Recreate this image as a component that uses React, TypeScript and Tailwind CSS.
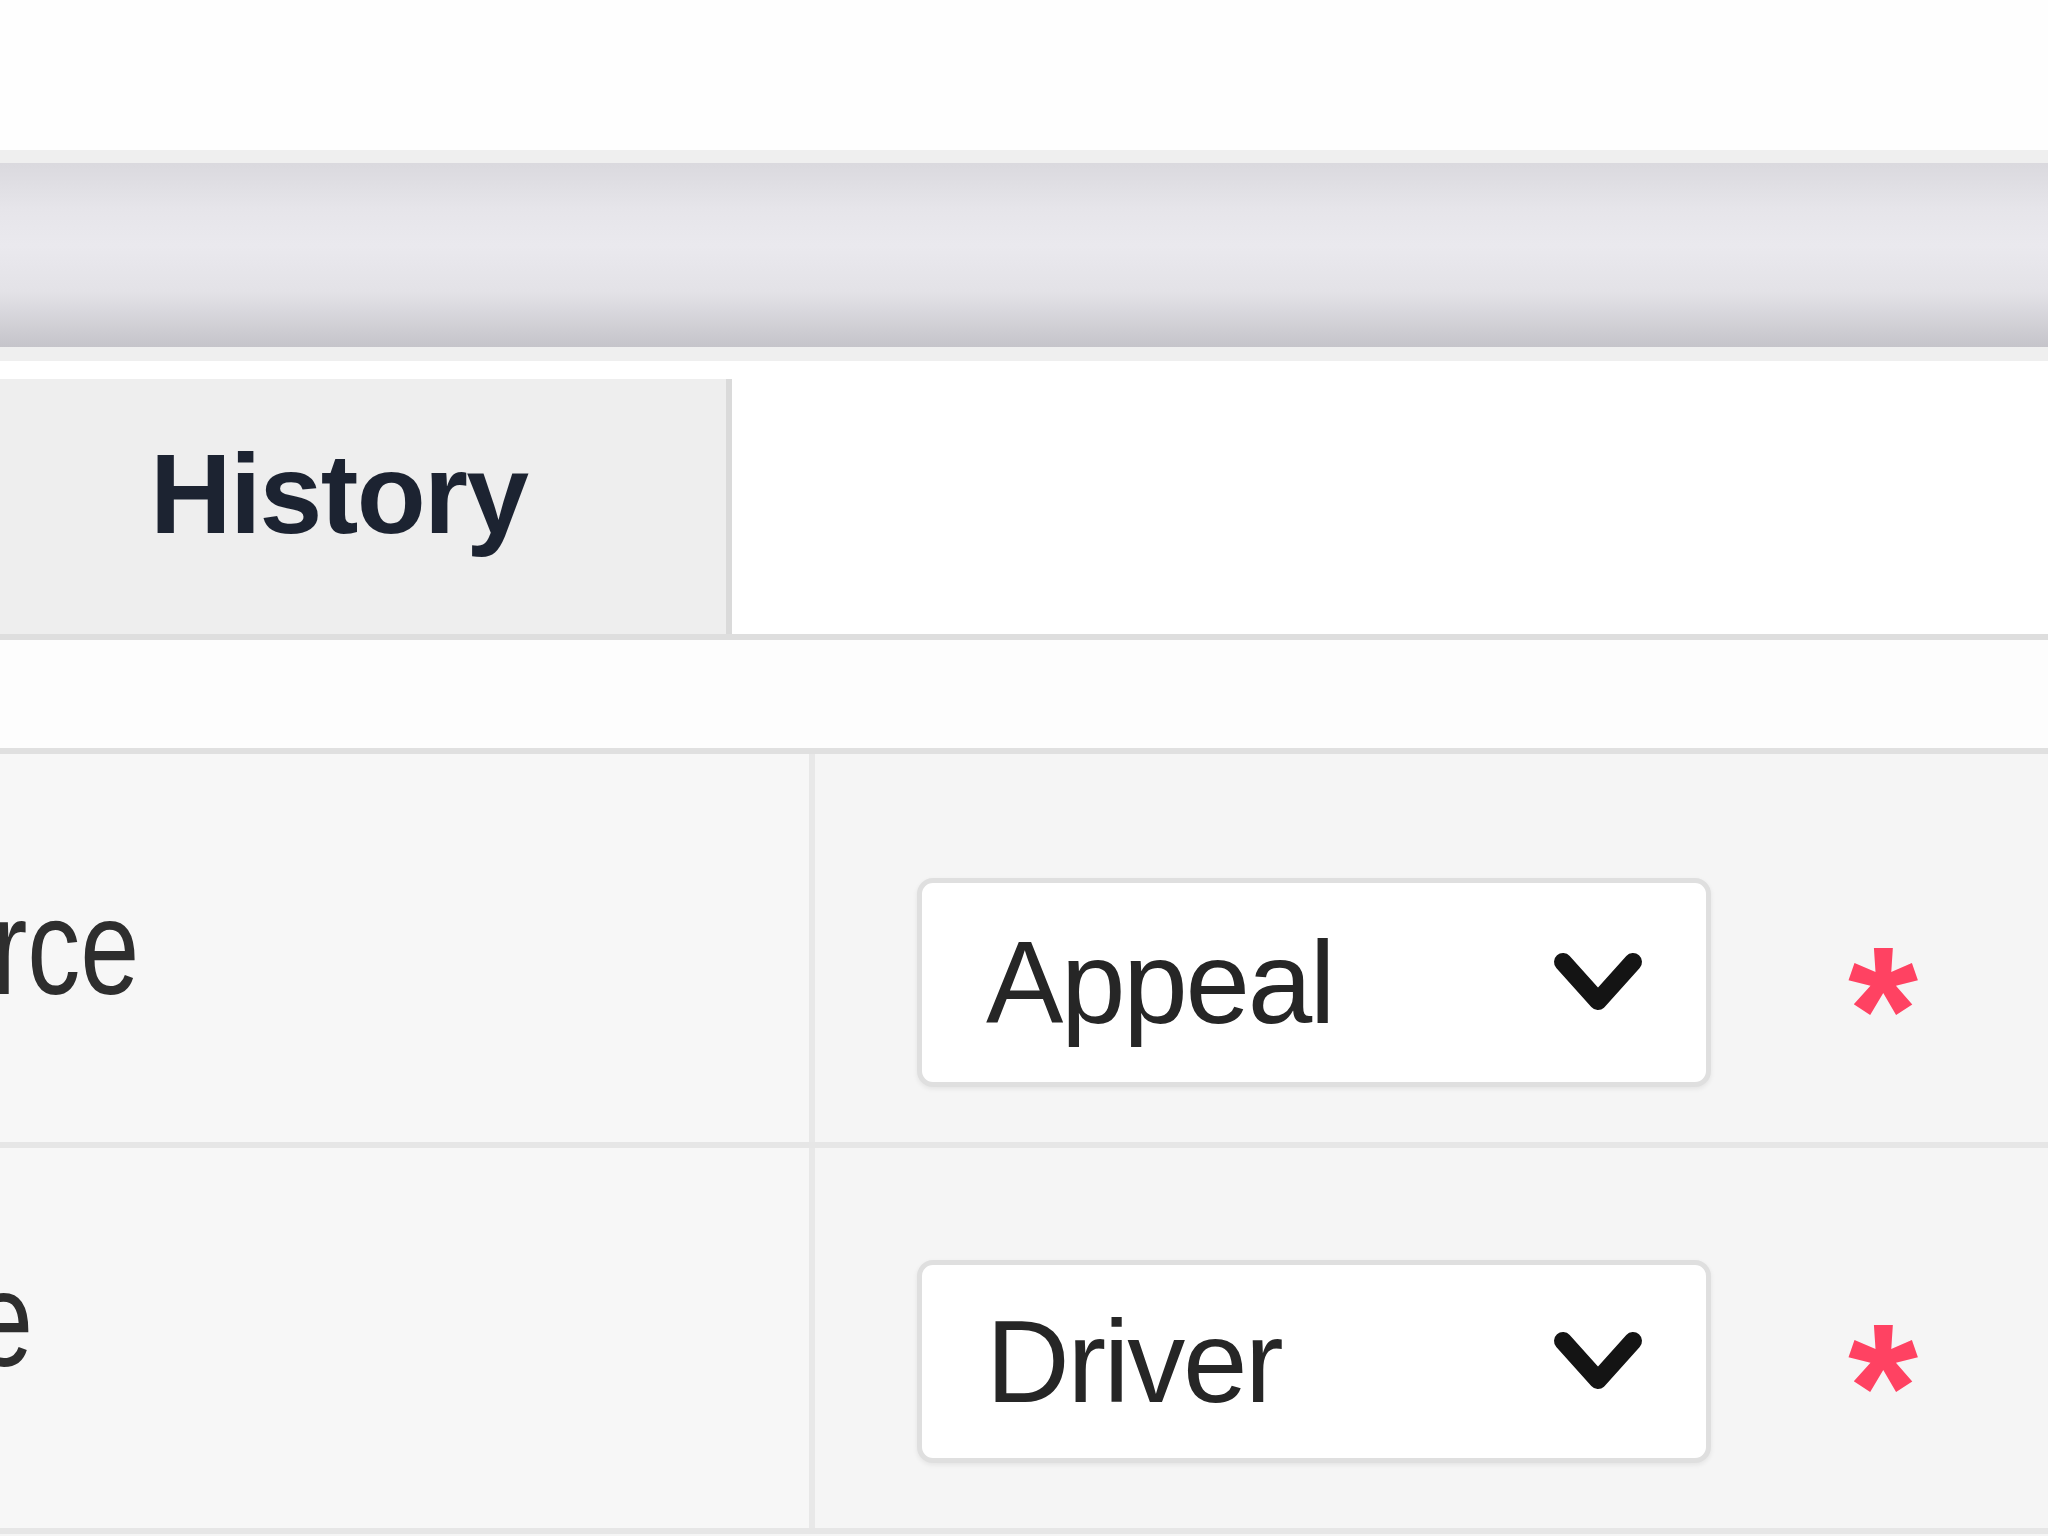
import React from "react";

function Chevron() {
  return (
    <svg width="96" height="68" viewBox="0 0 96 68" className="shrink-0">
      <polyline
        points="13,13 48,52 83,13"
        fill="none"
        stroke="#141414"
        strokeWidth="18"
        strokeLinecap="round"
        strokeLinejoin="round"
      />
    </svg>
  );
}

function Select({ value, h }: { value: string; h: string }) {
  return (
    <div
      className={`${h} w-[794px] shrink-0 rounded-[16px] border-[5px] border-[#dfdfdf] bg-white shadow-[0_2px_5px_rgba(0,0,0,0.07)] flex items-center pl-[64px] pr-[60px]`}
    >
      <span className="flex-1 text-[116px] leading-none tracking-[-0.02em] text-[#262626]">{value}</span>
      <Chevron />
    </div>
  );
}

export default function App() {
  return (
    <div className="w-[2048px] h-[1536px] overflow-hidden bg-white font-['Liberation_Sans',Arial,sans-serif]">
      <div className="h-[150px] bg-[#fefefe]" />
      <div className="h-[13px] bg-[#efefef]" />
      <div className="h-[184px] bg-[linear-gradient(to_bottom,#dad9de_0%,#e6e5ea_25%,#eae9ee_45%,#e3e2e7_70%,#c5c4ca_100%)]" />
      <div className="h-[14px] bg-[#efefef]" />
      <div className="h-[18px] bg-white" />

      <div className="flex h-[261px] border-b-[6px] border-[#dedede]">
        <div className="w-[732px] h-full bg-[#eeeeee] border-r-[6px] border-[#dadada] pl-[150px] pt-[59px] text-[113px] font-bold leading-none tracking-[-0.015em] text-[#1c2331]">
          History
        </div>
        <div className="flex-1" />
      </div>

      <div className="h-[108px] bg-[#fdfdfd]" />

      <div className="border-t-[6px] border-[#e0e0e0] bg-[#f5f5f5]">
        <div className="grid grid-cols-[815px_1fr] h-[394px] border-b-[6px] border-[#e6e6e6]">
          <div className="bg-[#f7f7f7] border-r-[6px] border-[#e8e8e8] overflow-hidden pt-[125px]">
            <div className="inline-block ml-[-8px] origin-left scale-x-[0.78] text-[136px] leading-none text-[#2e2e2e] whitespace-nowrap">
              rce
            </div>
          </div>
          <div className="flex items-start pl-[102px] pt-[124px]">
            <Select value="Appeal" h="h-[209px]" />
            <span className="ml-[137px] mt-[42px] text-[180px] font-bold leading-none text-[#ff4262]">*</span>
          </div>
        </div>
        <div className="grid grid-cols-[815px_1fr] h-[386px] border-b-[6px] border-[#e6e6e6]">
          <div className="bg-[#f7f7f7] border-r-[6px] border-[#e8e8e8] overflow-hidden pt-[103px]">
            <div className="inline-block ml-[-26px] origin-left scale-x-[0.78] text-[136px] leading-none text-[#2e2e2e] whitespace-nowrap">
              e
            </div>
          </div>
          <div className="flex items-start pl-[102px] pt-[112px]">
            <Select value="Driver" h="h-[203px]" />
            <span className="ml-[137px] mt-[37px] text-[180px] font-bold leading-none text-[#ff4262]">*</span>
          </div>
        </div>
        <div className="h-[20px] bg-[#f5f5f5]" />
      </div>
    </div>
  );
}
